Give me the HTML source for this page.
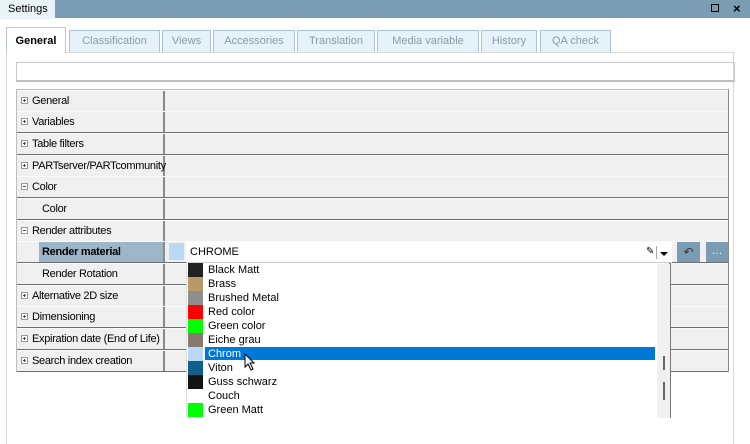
<!DOCTYPE html>
<html><head><style>
*{margin:0;padding:0;box-sizing:border-box}
body{width:750px;height:444px;overflow:hidden;background:#fff;font-family:"Liberation Sans",sans-serif;font-size:11px;color:#000;position:relative}
.abs{position:absolute}
.tab{position:absolute;top:30px;height:22px;background:#e6f2fa;border:1px solid #a9c4d6;border-bottom:none;color:#8a9aa6;text-align:center;line-height:21px;font-size:11px}
.row{position:absolute;left:17px;width:711px;height:22px;border-bottom:1px solid #6f6f6f;border-top:1px solid #fafafa;background:#f0f0f0}
.row .l{position:absolute;left:0;top:0;width:148px;height:20px;line-height:20px;border-right:2px solid #8a8a8a;white-space:nowrap;letter-spacing:-0.3px}
.pm{display:inline-block;width:7px;height:7px;border:1px solid #999;margin:0 4px 0 4px;position:relative;top:-1px;vertical-align:middle;background:#fff}
.pm:before{content:"";position:absolute;left:1px;top:2px;width:3px;height:1px;background:#555}
.pm.p:after{content:"";position:absolute;left:2px;top:1px;width:1px;height:3px;background:#555}
.it{position:absolute;left:188px;width:468px;height:14px;line-height:14px}
.sw{position:absolute;left:0;top:0;width:15px;height:14px}
.it span{position:absolute;left:20px;top:0}
</style></head><body>
<div class="abs" style="left:0;top:0;width:750px;height:18px;background:#7a9db3"></div>
<div class="abs" style="left:0;top:0;width:55px;height:19px;background:#e8f3fa;line-height:18px;padding-left:8px">Settings</div>
<div class="abs" style="left:711px;top:4px;width:8px;height:8px;border:1.5px solid #000"></div>
<div class="abs" style="left:733px;top:1px;font-size:13px;font-weight:bold">×</div>
<div class="abs" style="left:6px;top:52px;width:728px;height:392px;border:1px solid #d8d8d8;border-bottom:none"></div>
<div class="tab" style="left:6px;top:27px;width:60px;height:26px;background:#fff;border-color:#b9c9d4;color:#000;font-weight:bold;line-height:26px">General</div>
<div class="tab" style="left:69px;width:91px">Classification</div>
<div class="tab" style="left:162px;width:49px">Views</div>
<div class="tab" style="left:213px;width:82px">Accessories</div>
<div class="tab" style="left:297px;width:78px">Translation</div>
<div class="tab" style="left:377px;width:102px">Media variable</div>
<div class="tab" style="left:481px;width:56px">History</div>
<div class="tab" style="left:540px;width:71px">QA check</div>
<div class="abs" style="left:16px;top:62px;width:719px;height:20px;border:1px solid #c8c8c8;border-bottom:2px solid #c0c0c0"></div>
<div class="abs" style="left:16px;top:89px;width:713px;height:283px;border:1px solid #bdbdbd;border-right:2px solid #888;background:#f0f0f0"></div>

<div class="row" style="top:90px"><div class="l"><i class="pm p"></i>General</div></div>
<div class="row" style="top:111px"><div class="l"><i class="pm p"></i>Variables</div></div>
<div class="row" style="top:133px"><div class="l"><i class="pm p"></i>Table filters</div></div>
<div class="row" style="top:155px"><div class="l"><i class="pm p"></i>PARTserver/PARTcommunity</div></div>
<div class="row" style="top:176px"><div class="l"><i class="pm"></i>Color</div></div>
<div class="row" style="top:198px"><div class="l" style="padding-left:25px">Color</div></div>
<div class="row" style="top:220px"><div class="l"><i class="pm"></i>Render attributes</div></div>
<div class="row" style="top:241px;background:#f0f0f0"><div class="l" style="left:22px;width:126px;background:#9cb5c7;font-weight:bold;padding-left:3px">Render material</div></div>
<div class="row" style="top:263px"><div class="l" style="padding-left:25px">Render Rotation</div></div>
<div class="row" style="top:285px"><div class="l"><i class="pm p"></i>Alternative 2D size</div></div>
<div class="row" style="top:306px"><div class="l"><i class="pm p"></i>Dimensioning</div></div>
<div class="row" style="top:328px"><div class="l"><i class="pm p"></i>Expiration date (End of Life)</div></div>
<div class="row" style="top:350px"><div class="l"><i class="pm p"></i>Search index creation</div></div>

<div class="abs" style="left:169px;top:243px;width:15px;height:17px;background:#b8d8f3"></div>
<div class="abs" style="left:186px;top:242px;width:486px;height:21px;background:#fff;border-bottom:1px solid #ccc;line-height:21px;padding-left:4px">CHROME</div>
<div class="abs" style="left:646px;top:246px;font-size:10px">✎</div>
<div class="abs" style="left:656px;top:246px;width:1px;height:13px;background:#aaa"></div>
<div class="abs" style="left:660px;top:252px;border-left:4px solid transparent;border-right:4px solid transparent;border-top:4px solid #000"></div>
<div class="abs" style="left:677px;top:242px;width:23px;height:20px;background:#7a9db3;color:#333;text-align:center;line-height:20px;font-size:12px">↶</div>
<div class="abs" style="left:706px;top:242px;width:22px;height:20px;background:#7a9db3;color:#eee;text-align:center;line-height:18px">…</div>

<div class="abs" style="left:186px;top:263px;width:485px;height:155px;background:#fff;border-right:2px solid #777;border-left:1px solid #ddd"></div>
<div class="abs" style="left:657px;top:264px;width:13px;height:154px;background:#f0f0f0"></div>
<div class="abs" style="left:663px;top:356px;width:2px;height:14px;background:#666"></div>
<div class="abs" style="left:663px;top:382px;width:2px;height:18px;background:#666"></div>
<div class="abs" style="left:205px;top:347px;width:450px;height:13px;background:#0078d7"></div>

<div class="it" style="top:263px"><div class="sw" style="background:#222"></div><span>Black Matt</span></div>
<div class="it" style="top:277px"><div class="sw" style="background:#b89a66"></div><span>Brass</span></div>
<div class="it" style="top:291px"><div class="sw" style="background:#8e8e8e"></div><span>Brushed Metal</span></div>
<div class="it" style="top:305px"><div class="sw" style="background:#f00"></div><span>Red color</span></div>
<div class="it" style="top:319px"><div class="sw" style="background:#0f0"></div><span>Green color</span></div>
<div class="it" style="top:333px"><div class="sw" style="background:#877a6c"></div><span>Eiche grau</span></div>
<div class="it" style="top:347px"><div class="sw" style="background:#b8d8f3"></div><span style="color:#fff">Chrom</span></div>
<div class="it" style="top:361px"><div class="sw" style="background:#0f5e8c"></div><span>Viton</span></div>
<div class="it" style="top:375px"><div class="sw" style="background:#141414"></div><span>Guss schwarz</span></div>
<div class="it" style="top:389px"><div class="sw" style="background:#fff"></div><span>Couch</span></div>
<div class="it" style="top:403px"><div class="sw" style="background:#0f0"></div><span>Green Matt</span></div>
<svg class="abs" style="left:244px;top:353px" width="14" height="18" viewBox="0 0 14 18"><path d="M1 1 L1 14 L4 11 L7 17 L9 16 L6 10 L10 10 Z" fill="#fff" stroke="#000" stroke-width="1"/></svg>
</body></html>
